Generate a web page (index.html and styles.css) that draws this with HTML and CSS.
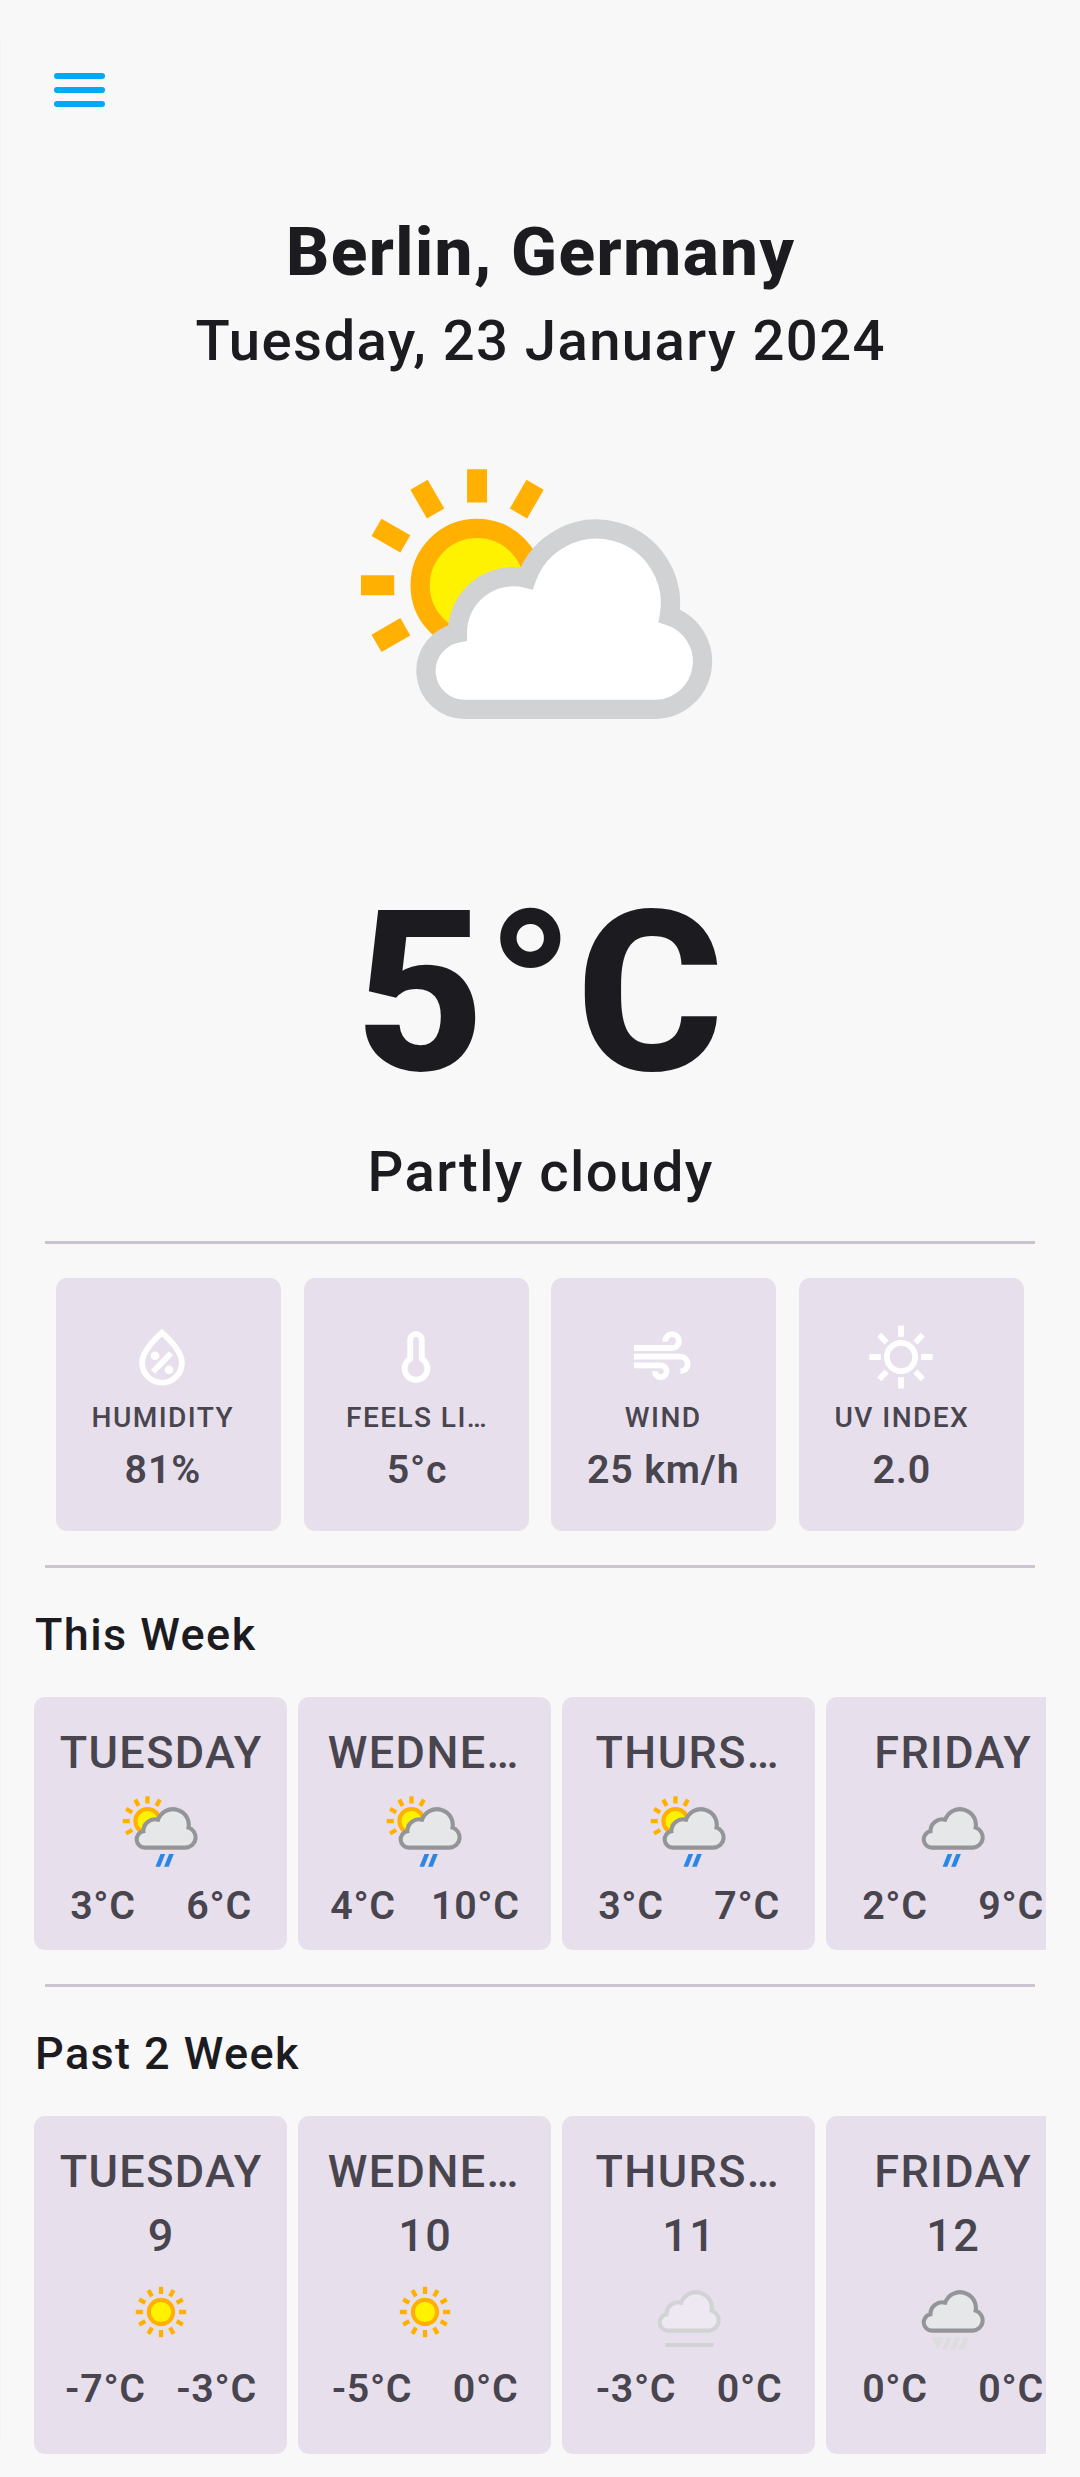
FILE: index.html
```html
<!DOCTYPE html>
<html lang="en">
<head>
<meta charset="utf-8">
<title>Weather – Berlin, Germany</title>
<link rel="stylesheet" href="styles.css">
</head>
<body>
<svg class="sprite" aria-hidden="true">
  <symbol id="cloud" viewBox="0 0 1240 1240">
    <path d="M393 882A116 116 0 0 1 371 652A168 168 0 0 1 579 488A222.6 222.6 0 0 1 1008 601A144 144 0 0 1 967 882Z"/>
  </symbol>
  <symbol id="half-sun" viewBox="0 0 1240 1240">
    <circle class="sun-disc" cx="430" cy="509" r="171"/>
    <g class="sun-rays">
      <path id="ray" d="M430 160V260"/>
      <use href="#ray" transform="rotate(30 430 509)"/>
      <use href="#ray" transform="rotate(-30 430 509)"/>
      <use href="#ray" transform="rotate(-60 430 509)"/>
      <use href="#ray" transform="rotate(-90 430 509)"/>
      <use href="#ray" transform="rotate(-120 430 509)"/>
    </g>
  </symbol>
  <symbol id="partly-cloudy" viewBox="0 0 1240 1240">
    <use href="#half-sun"/>
    <use href="#cloud" class="cloud-light"/>
  </symbol>
  <symbol id="drops" viewBox="0 0 1240 1240">
    <path class="rain" d="M613 972H679L608 1151H542ZM734 972H800L729 1151H663Z"/>
  </symbol>
  <symbol id="patchy-rain" viewBox="0 0 1240 1240">
    <use href="#half-sun"/>
    <use href="#cloud" class="cloud-dark"/>
    <use href="#drops"/>
  </symbol>
  <symbol id="light-rain" viewBox="0 0 1240 1240">
    <g transform="translate(-69 0)">
      <use href="#cloud" class="cloud-dark" width="1240" height="1240"/>
      <use href="#drops" width="1240" height="1240"/>
    </g>
  </symbol>
  <symbol id="sunny" viewBox="0 0 1240 1240">
    <circle class="sun-disc" cx="620" cy="620" r="171"/>
    <g class="sun-rays">
      <path id="beam" d="M620 265V365M620 875V975"/>
      <use href="#beam" transform="rotate(30 620 620)"/>
      <use href="#beam" transform="rotate(60 620 620)"/>
      <use href="#beam" transform="rotate(90 620 620)"/>
      <use href="#beam" transform="rotate(120 620 620)"/>
      <use href="#beam" transform="rotate(150 620 620)"/>
    </g>
  </symbol>
  <symbol id="mist" viewBox="0 0 1240 1240">
    <use href="#cloud" class="cloud-mist" x="-69" width="1240" height="1240"/>
    <path class="mist-line" d="M284 1085H963"/>
  </symbol>
  <symbol id="sleet" viewBox="0 0 1240 1240">
    <use href="#cloud" class="cloud-dark" x="-69" width="1240" height="1240"/>
    <path class="sleet" d="M320 975H485L407 1151ZM538 975H601L528 1151H456ZM659 975H722L649 1151H577ZM780 975H845L773 1151H698Z"/>
  </symbol>
</svg>

<main class="screen">
  <header class="top-bar">
    <button class="menu" aria-label="Menu"><span></span><span></span><span></span></button>
  </header>

  <section class="current">
    <h1 class="city">Berlin, Germany</h1>
    <p class="date">Tuesday, 23 January 2024</p>
    <svg class="current-icon" viewBox="0 0 1240 1240"><use href="#partly-cloudy"/></svg>
    <p class="temperature">5°C</p>
    <p class="condition">Partly cloudy</p>
  </section>

  <hr class="divider">

  <section class="stats">
    <article class="stat">
      <div class="stat-body">
        <svg class="stat-icon" viewBox="0 0 66 66">
          <path d="M33 8.6C28.5 12.8 13.1 26 13.1 38.7A19.9 19.9 0 0 0 52.9 38.7C52.9 26 37.5 12.8 33 8.6Z"/>
          <path d="M24 47.7L42 29.3"/>
          <circle class="dot" cx="26" cy="31.7" r="4.3"/>
          <circle class="dot" cx="40" cy="45.7" r="4.3"/>
        </svg>
        <span class="stat-label">HUMIDITY</span>
        <strong class="stat-value">81%</strong>
      </div>
    </article>
    <article class="stat">
      <div class="stat-body stat-body-full">
        <svg class="stat-icon" viewBox="0 0 66 66">
          <path d="M27.2 34.8V15.8A5.8 5.8 0 0 1 38.8 15.8V34.8A11.4 11.4 0 1 1 27.2 34.8Z"/>
        </svg>
        <span class="stat-label">FEELS LI…</span>
        <strong class="stat-value">5°c</strong>
      </div>
    </article>
    <article class="stat">
      <div class="stat-body">
        <svg class="stat-icon" viewBox="0 0 66 66">
          <path d="M5 24H43A6.9 6.9 0 1 0 36.2 17.7"/>
          <path d="M5 32.7H51.5A7.2 7.2 0 0 1 51.5 47.1"/>
          <path d="M5 41.3H31.6A5.9 5.9 0 1 1 25.8 47.2"/>
        </svg>
        <span class="stat-label">WIND</span>
        <strong class="stat-value">25 km/h</strong>
      </div>
    </article>
    <article class="stat">
      <div class="stat-body">
        <svg class="stat-icon" viewBox="0 0 66 66">
          <circle cx="33" cy="33" r="14.1"/>
          <path d="M33 1.4V12.8M33 53.2V64.6M1.4 33H12.8M53.2 33H64.6M11.2 10.8L18.6 18.4M47.4 18.4L54.8 10.8M11.2 55.2L18.6 47.6M47.4 47.6L54.8 55.2"/>
        </svg>
        <span class="stat-label">UV INDEX</span>
        <strong class="stat-value">2.0</strong>
      </div>
    </article>
  </section>

  <hr class="divider">

  <section class="forecast">
    <h2 class="section-title">This Week</h2>
    <div class="days">
      <article class="day">
        <h3 class="day-name">TUESDAY</h3>
        <svg class="day-icon" viewBox="0 0 1240 1240"><use href="#patchy-rain"/></svg>
        <div class="range"><span>3°C</span><i></i><span>6°C</span></div>
      </article>
      <article class="day">
        <h3 class="day-name day-name-cut">WEDNE…</h3>
        <svg class="day-icon" viewBox="0 0 1240 1240"><use href="#patchy-rain"/></svg>
        <div class="range"><span>4°C</span><i></i><span>10°C</span></div>
      </article>
      <article class="day">
        <h3 class="day-name day-name-cut">THURS…</h3>
        <svg class="day-icon" viewBox="0 0 1240 1240"><use href="#patchy-rain"/></svg>
        <div class="range"><span>3°C</span><i></i><span>7°C</span></div>
      </article>
      <article class="day">
        <h3 class="day-name">FRIDAY</h3>
        <svg class="day-icon" viewBox="0 0 1240 1240"><use href="#light-rain"/></svg>
        <div class="range"><span>2°C</span><i></i><span>9°C</span></div>
      </article>
    </div>
  </section>

  <hr class="divider">

  <section class="forecast">
    <h2 class="section-title">Past 2 Week</h2>
    <div class="days days-past">
      <article class="day">
        <h3 class="day-name">TUESDAY</h3>
        <p class="day-number">9</p>
        <svg class="day-icon" viewBox="0 0 1240 1240"><use href="#sunny"/></svg>
        <div class="range"><span>-7°C</span><i></i><span>-3°C</span></div>
      </article>
      <article class="day">
        <h3 class="day-name day-name-cut">WEDNE…</h3>
        <p class="day-number">10</p>
        <svg class="day-icon" viewBox="0 0 1240 1240"><use href="#sunny"/></svg>
        <div class="range"><span>-5°C</span><i></i><span>0°C</span></div>
      </article>
      <article class="day">
        <h3 class="day-name day-name-cut">THURS…</h3>
        <p class="day-number">11</p>
        <svg class="day-icon" viewBox="0 0 1240 1240"><use href="#mist"/></svg>
        <div class="range"><span>-3°C</span><i></i><span>0°C</span></div>
      </article>
      <article class="day">
        <h3 class="day-name">FRIDAY</h3>
        <p class="day-number">12</p>
        <svg class="day-icon" viewBox="0 0 1240 1240"><use href="#sleet"/></svg>
        <div class="range"><span>0°C</span><i></i><span>0°C</span></div>
      </article>
    </div>
  </section>
</main>
</body>
</html>
```
FILE: styles.css
```css
* {
  box-sizing: border-box;
  margin: 0;
  padding: 0;
}

body {
  background: #f8f8f8;
  color: #1c1b1f;
  font-family: Roboto, sans-serif;
  letter-spacing: 1.406px;
}

svg {
  display: block;
}

.sprite {
  display: none;
}

.screen {
  display: flex;
  flex-direction: column;
  width: 1080px;
  height: 2477px;
  overflow: hidden;
  background: linear-gradient(#eff5f5, #eff5f5) no-repeat 0 38px / 1px 2402px;
}

.screen > * {
  flex: none;
}

.top-bar {
  height: 212px;
  padding: 73px 53.5px 0;
}

.menu {
  display: flex;
  flex-direction: column;
  gap: 8px;
  width: 51px;
  border: 0;
  background: none;
}

.menu span {
  height: 6px;
  border-radius: 3px;
  background: #03a9f4;
}

.current {
  display: flex;
  flex-direction: column;
  align-items: center;
  height: 1029px;
  white-space: nowrap;
}

.city {
  padding-left: 1.4px;
  font-size: 67.5px;
  font-weight: 850;
  line-height: 80px;
}

.date {
  margin-top: 16px;
  padding-left: 1.4px;
  font-size: 56.25px;
  font-weight: 525;
  line-height: 66px;
}

.current-icon {
  width: 412.5px;
  height: 412.5px;
  margin-top: 42px;
}

.temperature {
  margin-top: 44px;
  font-size: 225px;
  font-weight: 800;
  line-height: 240px;
}

.condition {
  margin-top: 26px;
  padding-left: 1.4px;
  font-size: 56.25px;
  font-weight: 540;
  line-height: 66px;
}

.divider {
  height: 3px;
  margin: 0 45px;
  border: 0;
  background: #cac4d0;
}

.stats {
  display: grid;
  grid-template-columns: repeat(4, 1fr);
  gap: 22.67px;
  height: 321px;
  padding: 34px 56px;
}

.stat {
  height: 253px;
  padding: 46px 33.75px 0;
  border-radius: 11.25px;
  background: #e7e0ec;
  color: #49454f;
}

.stat-body {
  display: flex;
  flex-direction: column;
  align-items: center;
  width: max-content;
  white-space: nowrap;
}

.stat-body-full {
  width: 100%;
}

.stat-icon {
  width: 66px;
  height: 66px;
  fill: none;
  stroke: #fff;
  stroke-width: 5.8;
}

.stat-icon .dot {
  fill: #fff;
  stroke: none;
}

.stat-label {
  margin-top: 11px;
  padding-left: 1.8px;
  font-size: 28.125px;
  font-weight: 530;
  line-height: 33px;
}

.stat-value {
  margin-top: 14px;
  padding-left: 1.8px;
  font-size: 39.375px;
  font-weight: 650;
  letter-spacing: 0.85px;
  line-height: 44px;
}

.forecast {
  padding: 39px 34px 34px;
}

.section-title {
  padding-left: 1px;
  font-size: 45px;
  font-weight: 540;
  line-height: 56px;
}

.days {
  display: flex;
  gap: 11px;
  margin-top: 34px;
  overflow: hidden;
}

.day {
  flex: none;
  display: flex;
  flex-direction: column;
  align-items: center;
  width: 253px;
  height: 253px;
  padding: 28px 22.5px 0;
  border-radius: 11.25px;
  background: #e7e0ec;
  color: #49454f;
}

.days-past .day {
  height: 338px;
}

.day-name,
.day-number {
  padding-left: 1.4px;
  font-size: 45px;
  font-weight: 530;
  line-height: 56px;
}

.day-name-cut {
  padding: 0 1.4px 0 0;
}

.day-number {
  margin-top: 8px;
}

.day-icon {
  width: 88px;
  height: 88px;
  margin-top: 4px;
}

.range {
  display: flex;
  justify-content: space-around;
  align-self: stretch;
  margin-top: 11px;
  padding-left: 1px;
  font-size: 39.375px;
  font-weight: 640;
  letter-spacing: 0.7px;
  line-height: 44px;
  white-space: nowrap;
}

.sun-disc {
  fill: #fff200;
  stroke: #ffb000;
  stroke-width: 58;
}

.sun-rays {
  fill: none;
  stroke: #ffb000;
  stroke-width: 60;
}

.cloud-light,
.cloud-dark,
.cloud-mist {
  stroke-width: 58;
}

.cloud-light {
  fill: #fff;
  stroke: #d0d2d3;
}

.cloud-dark {
  fill: #e6e7e8;
  stroke: #939598;
}

.cloud-mist {
  fill: #eee8f3;
  stroke: #d1d3d4;
}

.mist-line {
  stroke: #d1d3d4;
  stroke-width: 58;
}

.rain {
  fill: #2b87e3;
}

.sleet {
  fill: #dddddd;
}
```
